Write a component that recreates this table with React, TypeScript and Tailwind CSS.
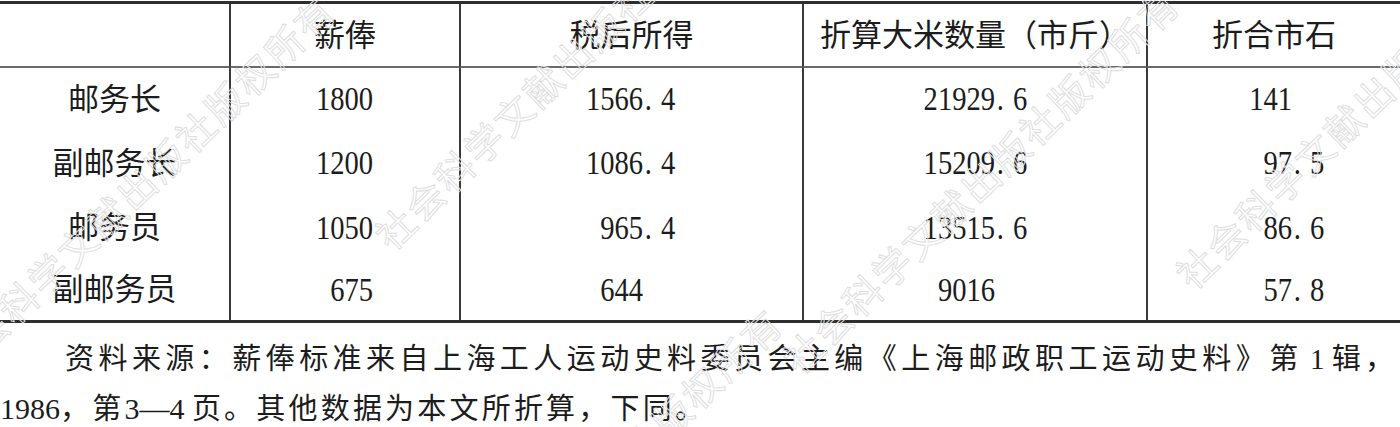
import React from "react";

type Cell = { i: string; f?: string };

const rows: { label: string; cells: Cell[] }[] = [
  { label: "邮务长", cells: [{ i: "1800" }, { i: "1566", f: "4" }, { i: "21929", f: "6" }, { i: "141" }] },
  { label: "副邮务长", cells: [{ i: "1200" }, { i: "1086", f: "4" }, { i: "15209", f: "6" }, { i: "97", f: "5" }] },
  { label: "邮务员", cells: [{ i: "1050" }, { i: "965", f: "4" }, { i: "13515", f: "6" }, { i: "86", f: "6" }] },
  { label: "副邮务员", cells: [{ i: "675" }, { i: "644" }, { i: "9016" }, { i: "57", f: "8" }] },
];

const intWidths = ["w-[142px]", "w-[182px]", "w-[191px]", "w-[144px]"];
const headers = ["薪俸", "税后所得", "折算大米数量（市斤）", "折合市石"];

function Num({ c, w }: { c: Cell; w: string }) {
  return (
    <div className="flex items-center text-[34px] leading-none">
      <div className={`flex shrink-0 justify-end ${w}`}>
        <span className="inline-block origin-right scale-x-[0.84]">{c.i}</span>
      </div>
      {c.f && (
        <span className="inline-block origin-left scale-x-[0.84] whitespace-nowrap">
          <span className="ml-[2px]">.</span>
          <span className="ml-[11px]">{c.f}</span>
        </span>
      )}
    </div>
  );
}

const wmPositions = [
  "left-[-55px] top-[353px]",
  "left-[381px] top-[222px]",
  "left-[789px] top-[346px]",
  "left-[1182px] top-[261px]",
  "left-[392px] top-[666px]",
];

export default function App() {
  return (
    <div className="relative h-[427px] w-[1400px] overflow-hidden bg-white text-[#1c1c1c] font-['Liberation_Serif','Noto_Sans_CJK_SC',serif]">
      <div className="mt-[1px] border-y-[3px] border-[#2e2e2e]">
        <div className="grid grid-cols-[229px_230px_343px_344px_1fr] grid-rows-[64px_62px_66px_63px_61px]">
          <div className="border-b-2 border-[#6a6a6a]" />
          {headers.map((h) => (
            <div
              key={h}
              className="flex items-center justify-center border-b-2 border-l-2 border-b-[#6a6a6a] border-l-[#3a3a3a] text-[31px] leading-none"
            >
              {h}
            </div>
          ))}
          {rows.map((r) => (
            <React.Fragment key={r.label}>
              <div className="flex items-center justify-center text-[31px] leading-none">{r.label}</div>
              {r.cells.map((c, idx) => (
                <div key={idx} className="flex items-center border-l-2 border-[#3a3a3a]">
                  <Num c={c} w={intWidths[idx]} />
                </div>
              ))}
            </React.Fragment>
          ))}
        </div>
      </div>

      <div className="mt-[12px] text-[29px]">
        <p className="pl-[65px] leading-[49px] tracking-[4.45px] whitespace-nowrap">
          资料来源：薪俸标准来自上海工人运动史料委员会主编《上海邮政职工运动史料》第<span className="tracking-normal"> 1 </span>辑<span className="tracking-normal">，</span>
        </p>
        <p className="leading-[49px] tracking-[3.2px] whitespace-nowrap">
          <span className="tracking-normal text-[30px]">1986</span>，第<span className="tracking-normal text-[30px]">3—4 </span>页。其他数据为本文所折算，下同。
        </p>
      </div>

      <div className="pointer-events-none absolute inset-0 overflow-hidden">
        {wmPositions.map((p) => (
          <span
            key={p}
            className={`absolute ${p} origin-left rotate-[-44deg] whitespace-nowrap text-[38px] leading-none tracking-[3px] text-transparent [-webkit-text-stroke:1px_#dedede] font-['Noto_Sans_CJK_SC',sans-serif]`}
          >
            社会科学文献出版社版权所有
          </span>
        ))}
      </div>
    </div>
  );
}
